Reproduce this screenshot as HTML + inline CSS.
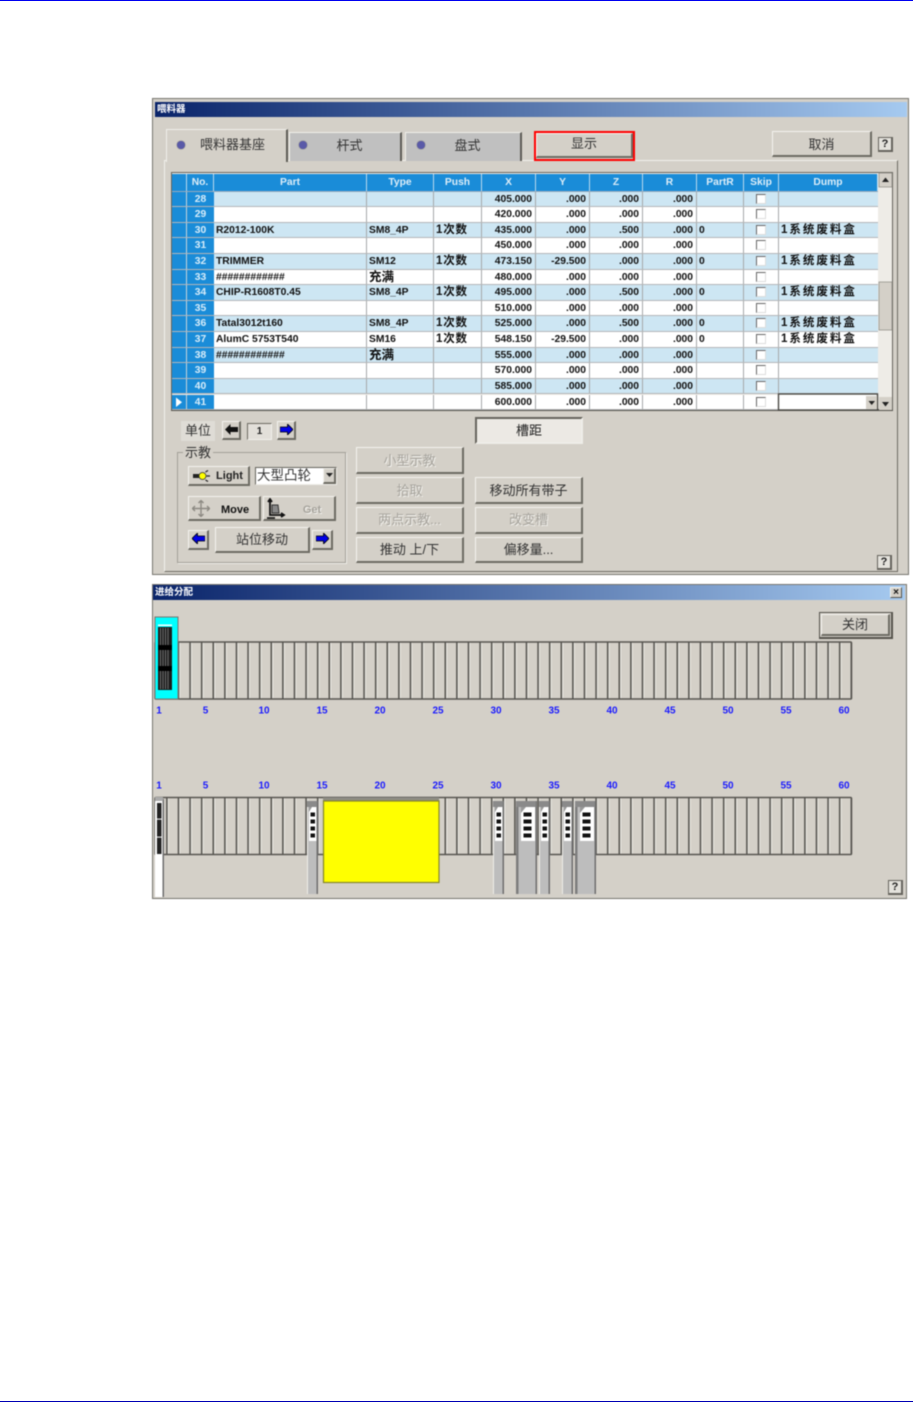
<!DOCTYPE html>
<html lang="zh"><head><meta charset="utf-8"><title>喂料器</title>
<style>
html,body{margin:0;padding:0;background:#fff}
body{width:913px;height:1402px;position:relative;overflow:hidden;font-family:"Liberation Sans","Noto Sans CJK SC",sans-serif;color:#222}
.line{position:absolute;left:0;width:913px;height:1px}
#all{position:absolute;left:0;top:0;width:913px;height:1402px;filter:blur(.5px)}
.abs,.b,.win,.tb,.r{position:absolute;box-sizing:border-box}
.win{background:#d4d0c8;border:1px solid #77756f}
.tb{background:linear-gradient(90deg,#0a246a,#a6caf0);color:#fff;font-size:9.5px;font-weight:bold;line-height:15px;padding-left:2px}
.b{background:#d4d0c8;border:1px solid;border-color:#f4f3ef #6d6b63 #6d6b63 #f4f3ef;border-width:1px 2px 2px 1px;display:flex;align-items:center;justify-content:center;font-size:13px;color:#333;white-space:nowrap;padding-bottom:2px}
.d{color:#a5a29b;text-shadow:1px 1px 0 #f2f1ed}
.tab{position:absolute;box-sizing:border-box;background:#c0c0c0;border-top:1px solid #f0efea;border-left:1px solid #f0efea;border-right:2px solid #5e5c56;font-size:13px;color:#333;display:flex;align-items:center;justify-content:center;padding-bottom:5px}
.dot{position:absolute;width:8px;height:8px;border-radius:50%;background:#5a5aa8;border:0;box-shadow:0 0 1px #333}
.r{left:172px;width:706px;height:15.6px;display:grid;grid-template-columns:15px 27px 153px 67px 48px 54px 54px 53px 54px 47px 35px 99px;grid-template-rows:14.6px;font-size:10.3px;font-weight:bold;line-height:16.6px;color:#111;border-bottom:1px solid #b4b6b8;background:#fff}
.r.a{background:#cde6f3}
.r>*{box-sizing:border-box;border-right:1px solid #a6a8aa;overflow:visible;white-space:nowrap;font-style:normal;text-decoration:none;font-weight:bold;padding-left:2px}
.r>:nth-child(1){background:#1a8cd8;padding:0;border-right:1px solid #c8d4dc}
.r>:nth-child(2){background:#1a8cd8;color:#d8edfa;text-align:center;padding:0;border-right:0}
.r>:nth-child(n+6):nth-child(-n+9){text-align:right;padding:0 3px 0 0}
.r>:nth-child(12){border-right:0;font-size:11.5px;letter-spacing:2px;line-height:15.6px}
.r>:nth-child(5){font-size:11.5px;letter-spacing:.8px;line-height:15.6px}
.c{font-size:12.5px!important;line-height:14.6px}
.r>:nth-child(11){position:relative;padding:0}
.r>:nth-child(11)::after{content:"";position:absolute;left:12px;top:2px;width:10px;height:10px;box-sizing:border-box;background:#fff;border:1px solid;border-color:#666 #ddd #ddd #666}
.r.hd>:nth-child(11)::after{display:none}
.r.hd{left:172px;top:174px;width:706px;height:17.5px;grid-template-rows:16.5px;background:#1a8cd8;color:#dcedf8;border-bottom:1px solid #9ab;line-height:17px;text-align:center}
.r.hd>*{padding:0!important;text-align:center!important;border-right:1px solid #b9d9ee!important;font-size:10.3px!important;letter-spacing:0!important;color:#dcedf8!important;background:#1a8cd8!important;line-height:17px!important}
.lb{font-size:10px;font-weight:bold;fill:#1a1aff;text-anchor:middle;font-family:"Liberation Sans",sans-serif}
</style></head><body>
<div class="line" style="top:0;background:#0000f0"></div>
<div class="line" style="top:1401px;background:#0000b4"></div>
<div id="all">

<!-- WINDOW 1 -->
<div class="win" style="left:152px;top:98px;width:757px;height:477px"></div>
<div class="tb" style="left:155px;top:102px;width:752px;height:15px;line-height:16px">喂料器</div>

<div class="abs" style="left:164px;top:160px;width:734px;height:412px;border:1px solid;border-color:#f2f1ec #6d6b63 #6d6b63 #f2f1ec"></div>

<div class="tab" style="left:166px;top:129px;width:122px;height:33px;background:#d4d0c8;padding-left:12px;z-index:2">喂料器基座</div>
<div class="tab" style="left:289px;top:132px;width:113px;height:29px;padding-left:9px">杆式</div>
<div class="tab" style="left:405px;top:132px;width:117px;height:29px;padding-left:9px">盘式</div>
<span class="dot" style="left:177px;top:141px;z-index:3"></span>
<span class="dot" style="left:299px;top:141px"></span>
<span class="dot" style="left:417px;top:141px"></span>

<div class="b" style="left:536px;top:133px;width:97px;height:25px;padding-bottom:6px">显示</div>
<div class="abs" style="left:534px;top:131px;width:101px;height:30px;border:2px solid #f00"></div>
<div class="b" style="left:772px;top:131px;width:100px;height:26px;padding-bottom:0">取消</div>
<div class="abs" style="left:878px;top:137px;width:15px;height:15px;border:1px solid #66645d;border-right:2px solid #66645d;border-bottom:2px solid #66645d;background:#e4e2dc;font-size:11px;font-weight:bold;line-height:12px;text-align:center">?</div>

<!-- TABLE -->
<div class="abs" style="left:171px;top:172px;width:722px;height:239px;border:1px solid #66645d;border-bottom:2px solid #55534d;background:#eeece7"></div>

<div class="r hd"><i></i><b>No.</b><span>Part</span><span>Type</span><span>Push</span><span>X</span><span>Y</span><span>Z</span><span>R</span><span>PartR</span><span>Skip</span><span>Dump</span></div>

<div class="r a" style="top:191.5px"><i></i><b>28</b><span></span><span></span><span></span><span>405.000</span><span>.000</span><span>.000</span><span>.000</span><span></span><span></span><span></span></div>
<div class="r" style="top:207.1px"><i></i><b>29</b><span></span><span></span><span></span><span>420.000</span><span>.000</span><span>.000</span><span>.000</span><span></span><span></span><span></span></div>
<div class="r a" style="top:222.7px"><i></i><b>30</b><span>R2012-100K</span><span>SM8_4P</span><span>1次数</span><span>435.000</span><span>.000</span><span>.500</span><span>.000</span><span>0</span><span></span><span>1系统废料盒</span></div>
<div class="r" style="top:238.4px"><i></i><b>31</b><span></span><span></span><span></span><span>450.000</span><span>.000</span><span>.000</span><span>.000</span><span></span><span></span><span></span></div>
<div class="r a" style="top:254px"><i></i><b>32</b><span>TRIMMER</span><span>SM12</span><span>1次数</span><span>473.150</span><span>-29.500</span><span>.000</span><span>.000</span><span>0</span><span></span><span>1系统废料盒</span></div>
<div class="r" style="top:269.6px"><i></i><b>33</b><span>############</span><span class="c">充满</span><span></span><span>480.000</span><span>.000</span><span>.000</span><span>.000</span><span></span><span></span><span></span></div>
<div class="r a" style="top:285.2px"><i></i><b>34</b><span>CHIP-R1608T0.45</span><span>SM8_4P</span><span>1次数</span><span>495.000</span><span>.000</span><span>.500</span><span>.000</span><span>0</span><span></span><span>1系统废料盒</span></div>
<div class="r" style="top:300.8px"><i></i><b>35</b><span></span><span></span><span></span><span>510.000</span><span>.000</span><span>.000</span><span>.000</span><span></span><span></span><span></span></div>
<div class="r a" style="top:316.4px"><i></i><b>36</b><span>Tatal3012t160</span><span>SM8_4P</span><span>1次数</span><span>525.000</span><span>.000</span><span>.500</span><span>.000</span><span>0</span><span></span><span>1系统废料盒</span></div>
<div class="r" style="top:332.1px"><i></i><b>37</b><span>AlumC 5753T540</span><span>SM16</span><span>1次数</span><span>548.150</span><span>-29.500</span><span>.000</span><span>.000</span><span>0</span><span></span><span>1系统废料盒</span></div>
<div class="r a" style="top:347.7px"><i></i><b>38</b><span>############</span><span class="c">充满</span><span></span><span>555.000</span><span>.000</span><span>.000</span><span>.000</span><span></span><span></span><span></span></div>
<div class="r" style="top:363.3px"><i></i><b>39</b><span></span><span></span><span></span><span>570.000</span><span>.000</span><span>.000</span><span>.000</span><span></span><span></span><span></span></div>
<div class="r a" style="top:378.9px"><i></i><b>40</b><span></span><span></span><span></span><span>585.000</span><span>.000</span><span>.000</span><span>.000</span><span></span><span></span><span></span></div>
<div class="r" style="top:394.5px"><i></i><b>41</b><span></span><span></span><span></span><span>600.000</span><span>.000</span><span>.000</span><span>.000</span><span></span><span></span><span></span></div>

<!-- row marker, editor, scrollbar -->
<svg class="abs" style="left:0;top:0" width="913" height="1402" viewBox="0 0 913 1402">
  <path d="M176 397.5V407L182 402.2Z" fill="#fff"/>
  <rect x="778.5" y="394" width="99" height="16" fill="#fff" stroke="#4a4944" stroke-width="1.4"/>
  <rect x="866" y="396" width="11" height="13" fill="#d4d0c8"/>
  <path d="M868.5 401H875L871.7 405Z" fill="#222"/>
  <rect x="879" y="173" width="13" height="14" fill="#d4d0c8" stroke="#8a8880" stroke-width=".7"/>
  <path d="M882 182H889L885.5 177.5Z" fill="#222"/>
  <rect x="879" y="282" width="13" height="48" fill="#d4d0c8" stroke="#8a8880" stroke-width=".7"/>
  <rect x="879" y="397" width="13" height="13" fill="#d4d0c8"/>
  <path d="M882 402H889L885.5 406.5Z" fill="#222"/>
</svg>

<!-- CONTROLS -->
<div class="abs" style="left:181px;top:421px;width:34px;height:20px;background:#dfdcd6;font-size:13px;line-height:20px;text-align:center;color:#333">单位</div>
<div class="b" style="left:222px;top:421px;width:19px;height:19px"><svg width="13" height="11"><path d="M0 5.5 5.5 0V3H13V8H5.5V11Z" fill="#111"/></svg></div>
<div class="abs" style="left:247px;top:423px;width:25px;height:17px;border:1px solid;border-color:#6d6b63 #f2f1ec #f2f1ec #6d6b63;background:#e2dfd9;font-size:10px;font-weight:bold;line-height:15px;text-align:center">1</div>
<div class="b" style="left:277px;top:421px;width:19px;height:19px"><svg width="13" height="11"><path d="M13 5.5 7.5 0V3H0V8H7.5V11Z" fill="#0000e8" stroke="#000" stroke-width=".8"/></svg></div>
<div class="abs" style="left:475px;top:417px;width:108px;height:27px;border:2px solid;border-color:#66645d #eeede8 #eeede8 #66645d;background:#ece9e4;font-size:13px;line-height:24px;text-align:center;color:#222">槽距</div>

<div class="abs" style="left:177px;top:452px;width:169px;height:111px;border:1px solid #a3a098;box-shadow:1px 1px 0 #eeede8"></div>
<div class="abs" style="left:183px;top:444px;padding:0 2px;background:#d4d0c8;font-size:13px;line-height:17px;color:#333">示教</div>

<div class="b" style="left:188px;top:466px;width:62px;height:20px;font-size:11px;font-weight:bold;padding:1px 0 0 22px;color:#222">Light</div>
<svg class="abs" style="left:193px;top:470px" width="18" height="12"><path d="M0 4H6V8H0Z" fill="#222"/><circle cx="9.500" cy="6" r="3.500" fill="#ff0" stroke="#333" stroke-width=".8"/><path d="M12.500 2 15 .5M12.500 10 15 11.500M13.500 6H17" stroke="#222" stroke-width="1.200"/></svg>
<div class="abs" style="left:255px;top:467px;width:82px;height:18px;border:1px solid;border-color:#66645d #eeede8 #eeede8 #66645d;background:#fff;font-size:13.5px;line-height:16px;padding-left:1px;color:#333">大型凸轮</div>
<div class="b" style="left:323px;top:468px;width:13px;height:16px"><svg width="7" height="4"><path d="M0 0H7L3.5 4Z" fill="#222"/></svg></div>

<div class="b" style="left:188px;top:496px;width:73px;height:25px;font-size:11px;font-weight:bold;padding:3px 0 0 22px;color:#111">Move</div>
<svg class="abs" style="left:192px;top:500px" width="18" height="17" fill="none" stroke="#8d8a83" stroke-width="1.4"><path d="M9 0V17M0 8.5H18M6.5 3 9 .5 11.500 3M6.500 14 9 16.500 11.500 14M3 6 .5 8.500 3 11M15 6 17.500 8.500 15 11"/></svg>
<div class="b d" style="left:263px;top:496px;width:73px;height:25px;font-size:11px;font-weight:bold;padding:3px 0 0 26px">Get</div>
<svg class="abs" style="left:266px;top:498px" width="20" height="21" fill="none" stroke="#111" stroke-width="1.800"><path d="M4 2V17H17"/><path d="M2 4 4 1 6 4M15 15 18 17 15 19" /><path d="M6 7 H12 L13 15 H6Z" stroke-width="1" stroke="#333" fill="#888"/><path d="M1 20H9" stroke-width="1.600"/></svg>

<div class="b" style="left:188px;top:530px;width:21px;height:20px"><svg width="13" height="11"><path d="M0 5.5 5.500 0V3H13V8H5.500V11Z" fill="#0000e8" stroke="#000" stroke-width=".8"/></svg></div>
<div class="b" style="left:215px;top:527px;width:95px;height:26px">站位移动</div>
<div class="b" style="left:312px;top:530px;width:21px;height:20px"><svg width="13" height="11"><path d="M13 5.500 7.500 0V3H0V8H7.500V11Z" fill="#0000e8" stroke="#000" stroke-width=".8"/></svg></div>

<div class="b d" style="left:356px;top:447px;width:108px;height:27px">小型示教</div>
<div class="b d" style="left:356px;top:477px;width:108px;height:27px">拾取</div>
<div class="b d" style="left:356px;top:507px;width:108px;height:27px;padding-bottom:4px">两点示教...</div>
<div class="b" style="left:356px;top:537px;width:108px;height:26px">推动 上/下</div>
<div class="b" style="left:475px;top:477px;width:108px;height:27px">移动所有带子</div>
<div class="b d" style="left:475px;top:507px;width:108px;height:27px;padding-bottom:4px">改变槽</div>
<div class="b" style="left:475px;top:537px;width:108px;height:26px">偏移量...</div>

<div class="abs" style="left:877px;top:555px;width:15px;height:15px;border:1px solid #66645d;border-right:2px solid #66645d;border-bottom:2px solid #66645d;background:#e4e2dc;font-size:11px;font-weight:bold;line-height:12px;text-align:center">?</div>

<!-- WINDOW 2 -->
<div class="win" style="left:152px;top:584px;width:755px;height:315px"></div>
<div class="tb" style="left:153px;top:585px;width:752px;height:15px">进给分配</div>
<div class="abs" style="left:890px;top:587px;width:12px;height:11px;background:#d4d0c8;border:1px solid;border-color:#f2f1ec #55534d #55534d #f2f1ec;font-size:10px;font-weight:bold;line-height:9px;text-align:center;color:#111">×</div>
<div class="abs" style="left:819px;top:612px;width:74px;height:27px;border:1px solid #55534d;border-right-width:2px;border-bottom-width:2px;padding:1px"><div class="b" style="position:static;height:100%;border-width:1px 2px 2px 1px">关闭</div></div>
<div class="abs" style="left:888px;top:880px;width:15px;height:15px;border:1px solid #66645d;border-right:2px solid #66645d;border-bottom:2px solid #66645d;background:#e4e2dc;font-size:11px;font-weight:bold;line-height:12px;text-align:center">?</div>

<svg class="abs" style="left:0;top:0" width="913" height="1402" viewBox="0 0 913 1402">
  <defs>
    <pattern id="sl" patternUnits="userSpaceOnUse" x="154.500" y="0" width="11.600" height="100">
      <rect x="0" y="0" width="1.700" height="100" fill="#575550"/>
      <rect x="1.700" y="0" width="1" height="100" fill="#eeede8"/>
    </pattern>
    <g id="nf">
      <rect width="11" height="93" fill="#bdbdbd"/>
      <rect width="1" height="93" fill="#eeede8"/>
      <rect x="9.500" width="1.500" height="93" fill="#6f6f6f"/>
      <rect width="10" height="6" fill="#8a8a8a"/>
      <rect x="2" y="6" width="7.500" height="34" fill="#fff"/>
      <path d="M2 6H5L2 11Z" fill="#999"/>
      <rect x="3.500" y="11.500" width="4.500" height="4" fill="#111"/>
      <rect x="3.500" y="18.500" width="4.500" height="4" fill="#111"/>
      <rect x="3.500" y="25.500" width="4.500" height="4" fill="#111"/>
      <rect x="3.500" y="32.500" width="4.500" height="4" fill="#111"/>
    </g>
    <g id="wf">
      <rect width="21" height="93" fill="#bdbdbd"/>
      <rect width="2.500" height="93" fill="#7d7d7d"/>
      <rect x="19.500" width="1.500" height="93" fill="#6f6f6f"/>
      <rect width="20" height="6" fill="#8a8a8a"/>
      <rect x="5" y="6" width="14" height="34" fill="#fff"/>
      <path d="M5 6H10L5 12Z" fill="#999"/>
      <rect x="7.500" y="11.500" width="8" height="4" fill="#111"/>
      <rect x="7.500" y="18.500" width="8" height="4" fill="#111"/>
      <rect x="7.500" y="25.500" width="8" height="4" fill="#111"/>
      <rect x="7.500" y="32.500" width="8" height="4" fill="#111"/>
    </g>
  </defs>

  <!-- top rail -->
  <rect x="155" y="642" width="696.500" height="57" fill="url(#sl)"/>
  <rect x="155" y="642" width="696.500" height="57" rx="1" fill="none" stroke="#575550" stroke-width="1.500"/>
  <!-- selected feeder -->
  <rect x="155" y="617" width="23" height="82" fill="#00ffff" stroke="#77756f"/>
  <rect x="158" y="624.500" width="14" height="1.500" fill="#fff"/>
  <rect x="158" y="627" width="14" height="63" fill="#1c1c1c"/>
  <path d="M160.500 628V689M163 628V689M165.500 628V689M168 628V689" stroke="#777" stroke-width=".9"/>
  <rect x="158" y="645" width="14" height="5" fill="#000"/>
  <rect x="158" y="666" width="14" height="5" fill="#000"/>

  <!-- labels -->
  <g>
    <text class="lb" x="159" y="713.500">1</text><text class="lb" x="205.500" y="713.500">5</text><text class="lb" x="264" y="713.500">10</text><text class="lb" x="322" y="713.500">15</text><text class="lb" x="380" y="713.500">20</text><text class="lb" x="438" y="713.500">25</text><text class="lb" x="496" y="713.500">30</text><text class="lb" x="554" y="713.500">35</text><text class="lb" x="612" y="713.500">40</text><text class="lb" x="670" y="713.500">45</text><text class="lb" x="728" y="713.500">50</text><text class="lb" x="786" y="713.500">55</text><text class="lb" x="844" y="713.500">60</text>
    <text class="lb" x="159" y="788.500">1</text><text class="lb" x="205.500" y="788.500">5</text><text class="lb" x="264" y="788.500">10</text><text class="lb" x="322" y="788.500">15</text><text class="lb" x="380" y="788.500">20</text><text class="lb" x="438" y="788.500">25</text><text class="lb" x="496" y="788.500">30</text><text class="lb" x="554" y="788.500">35</text><text class="lb" x="612" y="788.500">40</text><text class="lb" x="670" y="788.500">45</text><text class="lb" x="728" y="788.500">50</text><text class="lb" x="786" y="788.500">55</text><text class="lb" x="844" y="788.500">60</text>
  </g>

  <!-- bottom rail -->
  <rect x="155" y="797.500" width="696.500" height="57" fill="url(#sl)"/>
  <rect x="155" y="797.500" width="696.500" height="57" rx="1" fill="none" stroke="#575550" stroke-width="1.500"/>

  <!-- feeder 1 -->
  <rect x="155" y="799" width="9" height="98" fill="#fff"/>
  <rect x="162.500" y="799" width="1.500" height="98" fill="#6f6f6f"/>
  <rect x="155" y="797" width="8" height="4" fill="#aaa"/>
  <rect x="157" y="803" width="4.500" height="51" fill="#222"/>
  <rect x="157" y="818.500" width="4.500" height="1.200" fill="#ddd"/>
  <rect x="157" y="836.500" width="4.500" height="1.200" fill="#ddd"/>

  <!-- yellow -->
  <rect x="323" y="797.500" width="116" height="4" fill="#8f8d85"/>
  <rect x="323.500" y="801" width="115.500" height="81.500" fill="#ffff00" stroke="#85852a" stroke-width="1.200"/>

  <use href="#nf" x="307" y="801"/>
  <use href="#nf" x="493" y="801"/>
  <use href="#wf" x="516" y="801"/>
  <use href="#nf" x="539" y="801"/>
  <use href="#nf" x="562" y="801"/>
  <use href="#wf" x="575" y="801"/>
</svg>
</div>
</body></html>
